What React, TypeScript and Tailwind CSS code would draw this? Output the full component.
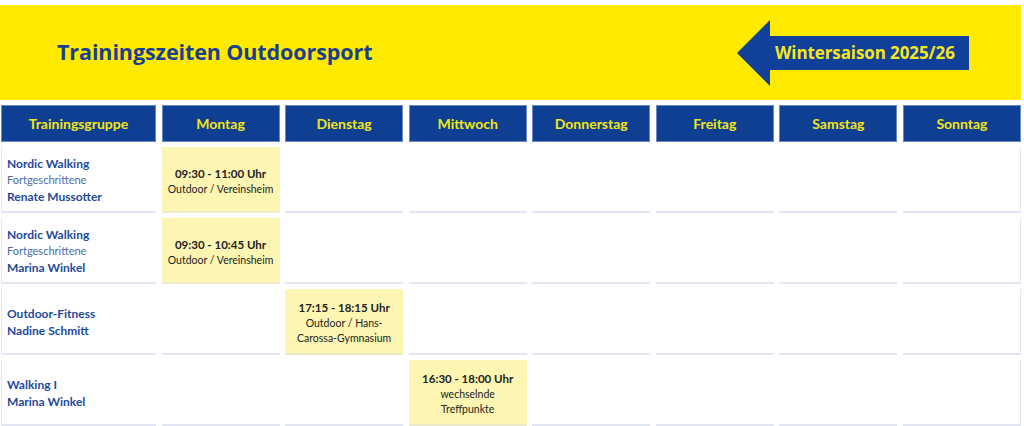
import React from "react";

type Entry = { time: string; place: string[] };
type Row = { group: string; sub?: string; trainer: string; day: number; entry: Entry };

const days = ["Montag", "Dienstag", "Mittwoch", "Donnerstag", "Freitag", "Samstag", "Sonntag"];

const rows: Row[] = [
  { group: "Nordic Walking", sub: "Fortgeschrittene", trainer: "Renate Mussotter", day: 0, entry: { time: "09:30 - 11:00 Uhr", place: ["Outdoor / Vereinsheim"] } },
  { group: "Nordic Walking", sub: "Fortgeschrittene", trainer: "Marina Winkel", day: 0, entry: { time: "09:30 - 10:45 Uhr", place: ["Outdoor / Vereinsheim"] } },
  { group: "Outdoor-Fitness", trainer: "Nadine Schmitt", day: 1, entry: { time: "17:15 - 18:15 Uhr", place: ["Outdoor / Hans-", "Carossa-Gymnasium"] } },
  { group: "Walking I", trainer: "Marina Winkel", day: 2, entry: { time: "16:30 - 18:00 Uhr", place: ["wechselnde", "Treffpunkte"] } },
];

export default function App() {
  return (
    <div className="w-[1024px] h-[426px] bg-white overflow-hidden" style={{ fontFamily: "Lato, 'Open Sans', sans-serif" }}>
      <div className="mt-[5px] w-[1021px] h-[95px] bg-[#ffea00] flex items-center justify-between">
        <h1 className="ml-[57px] text-[21.5px] font-bold text-[#1b3f8f] font-['Open_Sans',sans-serif] tracking-[-0.1px]">Trainingszeiten Outdoorsport</h1>
        <div className="relative mr-[52px] w-[232px] h-[66px] flex items-center">
          <svg className="absolute inset-0" width="232" height="66" viewBox="0 0 232 66">
            <polygon points="0,33 33,0 33,16 232,16 232,50 33,50 33,66" fill="#10409a" />
          </svg>
          <span className="relative ml-[38px] text-[17px] font-bold text-[#f6e61a] font-['Open_Sans',sans-serif] tracking-[-0.1px]">Wintersaison 2025/26</span>
        </div>
      </div>
      <div className="ml-[1px] mt-[5px] w-[1020px] grid grid-cols-[155px_repeat(7,1fr)] gap-x-[5.5px] gap-y-[5px]">
        <div className="h-[37px] bg-[#0f3f93] border border-[#6a88c6] flex items-center justify-center text-[14px] font-bold text-[#f3e61a]">Trainingsgruppe</div>
        {days.map((d) => (
          <div key={d} className="h-[37px] bg-[#0f3f93] border border-[#6a88c6] flex items-center justify-center text-[14px] font-bold text-[#f3e61a]">{d}</div>
        ))}
        {rows.map((r, ri) => (
          <React.Fragment key={ri}>
            <div className="h-[66px] border-l border-b-2 border-[#e2e6f2] pl-[5px] pt-[3px] flex flex-col justify-center leading-[16.5px]">
              <span className="text-[12px] font-bold text-[#1e4a9c]">{r.group}</span>
              {r.sub && <span className="text-[11px] text-[#4a6bb0]">{r.sub}</span>}
              <span className="text-[12px] font-bold text-[#1e4a9c]">{r.trainer}</span>
            </div>
            {days.map((d, di) => (
              <div
                key={d}
                className={
                  di === r.day
                    ? "h-[66px] bg-[#fdf6b2] border-b-2 border-[#ece9c9] pt-[3px] flex flex-col items-center justify-center text-center text-[#222]"
                    : di === 6
                    ? "h-[66px] border-b-2 border-r border-[#e2e6f2]"
                    : "h-[66px] border-b-2 border-[#e2e6f2]"
                }
              >
                {di === r.day && (
                  <>
                    <span className="text-[11.5px] font-bold leading-[17px]">{r.entry.time}</span>
                    {r.entry.place.map((p) => (
                      <span key={p} className="text-[10.5px] leading-[15px]">{p}</span>
                    ))}
                  </>
                )}
              </div>
            ))}
          </React.Fragment>
        ))}
      </div>
    </div>
  );
}
